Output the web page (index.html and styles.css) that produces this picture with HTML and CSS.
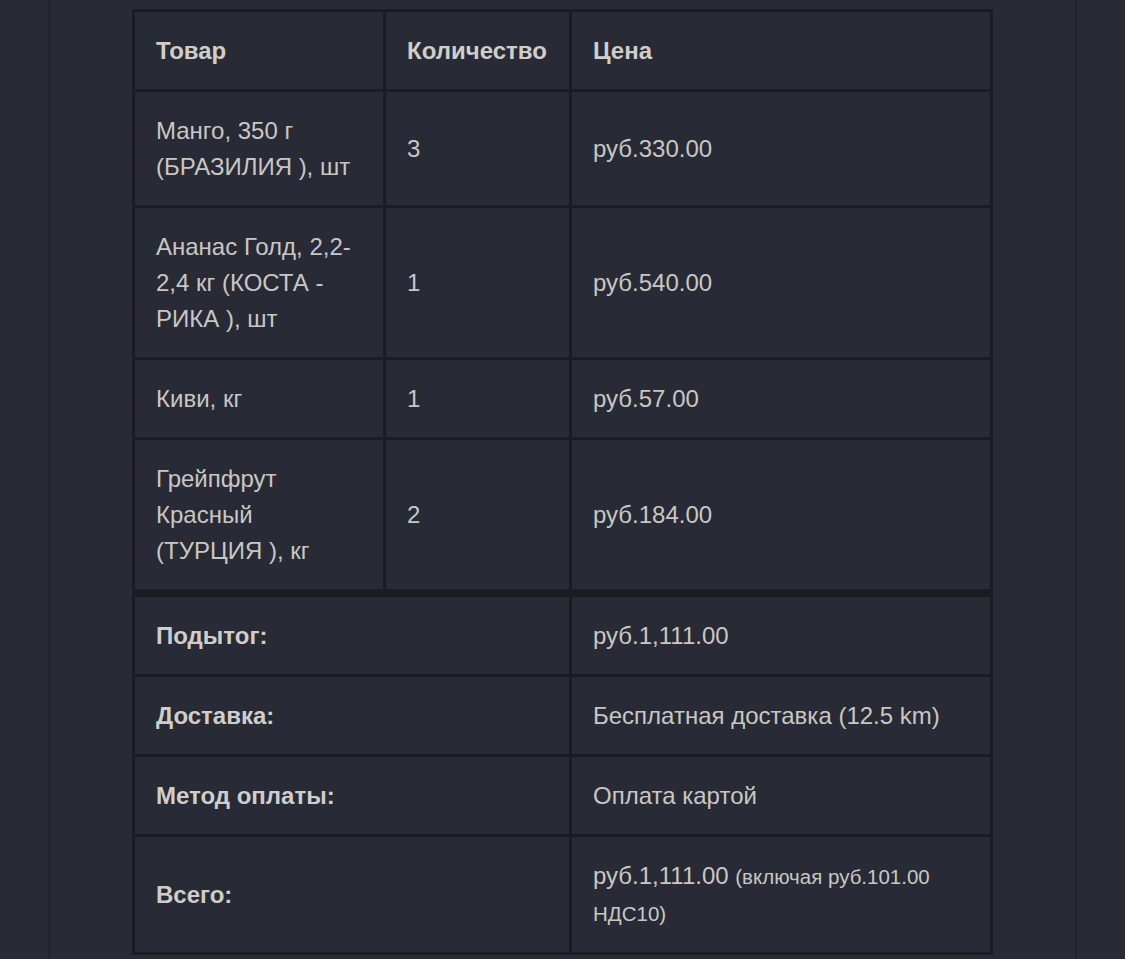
FILE: index.html
```html
<!DOCTYPE html>
<html lang="ru">
<head>
<meta charset="utf-8">
<title>Заказ</title>
<link rel="stylesheet" href="styles.css">
</head>
<body>
<div class="page">
  <div class="container">
    <table class="order">
      <colgroup>
        <col class="c-product">
        <col class="c-qty">
        <col class="c-price">
      </colgroup>
      <thead>
        <tr>
          <th>Товар</th>
          <th>Количество</th>
          <th>Цена</th>
        </tr>
      </thead>
      <tbody>
        <tr>
          <td>Манго, 350 г (БРАЗИЛИЯ ), шт</td>
          <td>3</td>
          <td>руб.330.00</td>
        </tr>
        <tr>
          <td>Ананас Голд, 2,2-2,4 кг (КОСТА - РИКА ), шт</td>
          <td>1</td>
          <td>руб.540.00</td>
        </tr>
        <tr>
          <td>Киви, кг</td>
          <td>1</td>
          <td>руб.57.00</td>
        </tr>
        <tr>
          <td>Грейпфрут Красный (ТУРЦИЯ ), кг</td>
          <td>2</td>
          <td>руб.184.00</td>
        </tr>
      </tbody>
      <tfoot>
        <tr class="first">
          <th colspan="2">Подытог:</th>
          <td>руб.1,111.00</td>
        </tr>
        <tr>
          <th colspan="2">Доставка:</th>
          <td>Бесплатная доставка (12.5 km)</td>
        </tr>
        <tr>
          <th colspan="2">Метод оплаты:</th>
          <td>Оплата картой</td>
        </tr>
        <tr>
          <th colspan="2">Всего:</th>
          <td>руб.1,111.00 <small>(включая руб.101.00 НДС10)</small></td>
        </tr>
      </tfoot>
    </table>
  </div>
</div>
</body>
</html>
```

FILE: styles.css
```css
html, body {
  margin: 0;
  padding: 0;
  background: #282b35;
}

body {
  font-family: "Liberation Sans", Arial, sans-serif;
  color: #c9c7c3;
}

.page {
  padding: 0 48px;
}

.container {
  border-left: 2px solid #22242c;
  border-right: 2px solid #22242c;
  padding: 9px 82px 40px;
  min-height: 1000px;
}

.order {
  width: 858px;
  border-collapse: collapse;
  table-layout: fixed;
  border: 3px solid #1c1d22;
}

.c-product { width: 251px; }
.c-qty { width: 186px; }
.c-price { width: 421px; }

.order th,
.order td {
  border: 3px solid #1c1d22;
  padding: 21px 21px 20px;
  font-size: 24px;
  line-height: 36px;
  text-align: left;
  vertical-align: middle;
  background: #282b35;
}

.order th {
  font-weight: bold;
  color: #d0ceca;
}

.order td {
  font-weight: normal;
}

.order tfoot tr.first th,
.order tfoot tr.first td {
  border-top: 8px solid #1c1d22;
}

.order small {
  font-size: 20.5px;
}
```
